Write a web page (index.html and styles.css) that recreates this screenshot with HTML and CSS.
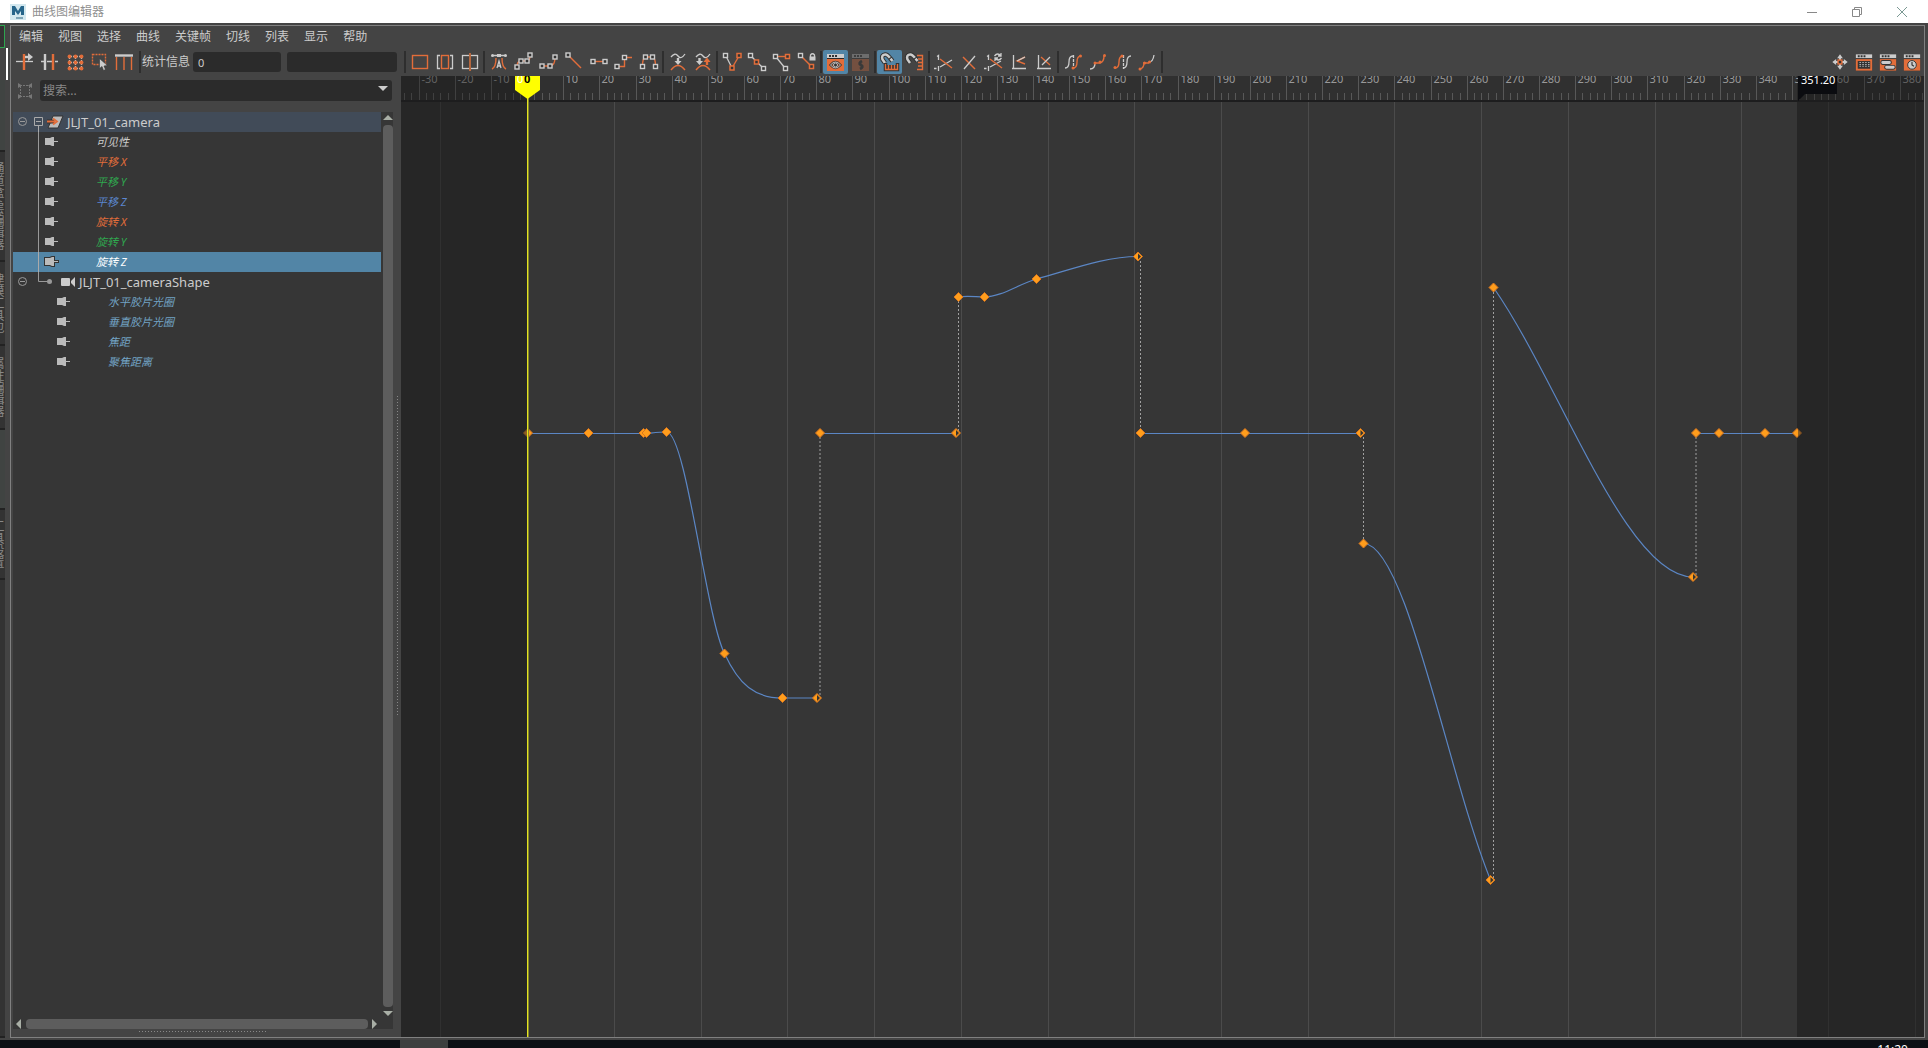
FILE: index.html
```html
<!DOCTYPE html>
<html lang="zh-CN">
<head>
<meta charset="utf-8">
<title>曲线图编辑器</title>
<link rel="stylesheet" href="styles.css">
</head>
<body>
<svg class="sprite" aria-hidden="true">
  <defs>
    <g id="sq"><rect x="-2" y="-2" width="4" height="4" fill="#333" stroke="#ccc" stroke-width="1.4"/></g>
    <g id="sqo"><rect x="-2" y="-2" width="4" height="4" fill="#333" stroke="#e26d3a" stroke-width="1.5"/></g>
    <g id="win">
      <rect x="4" y="4" width="17" height="17" fill="#2b2b2b"/>
      <rect x="4" y="4" width="17" height="4" fill="#ccc"/>
      <path d="M6 6h2M9 6h2M12 6h2" stroke="#333" stroke-width="2"/>
      <rect x="4" y="9" width="17" height="12" fill="#e26d3a"/>
    </g>
    <g id="magnet"><path d="M8 13L5.500 9.500Q4 5 8 4.500Q10 4 13 8L15.500 11" fill="none" stroke="#333" stroke-width="4.500"/><path d="M8 13L5.500 9.500Q4 5 8 4.500Q10 4 13 8L15.500 11" fill="none" stroke="#ccc" stroke-width="2.500" stroke-dasharray="17 1 3"/></g>
  </defs>
  <symbol id="t-move" viewBox="0 0 25 24"><path class="g" d="M3 11.500h17"/><path class="o w" d="M11 4v16"/><path class="g w" d="M12 7h5"/><path class="gf" d="M15 3l5 4-5 4z"/></symbol>
  <symbol id="t-insert" viewBox="0 0 25 24"><path class="g" d="M3 11.500h3M9 11.500h5M17 11.500h3"/><path class="g w" d="M7 4v16"/><path class="o w" d="M15 4v16"/></symbol>
  <symbol id="t-lattice" viewBox="0 0 25 24"><path class="g" stroke-dasharray="1 1" d="M6 6.500h13M6 12.500h13M6 18.500h13M6.500 6v13M12.500 6v13M18.500 6v13"/><g class="of"><circle cx="6.500" cy="6.500" r="1.900"/><circle cx="12.500" cy="6.500" r="1.900"/><circle cx="18.500" cy="6.500" r="1.900"/><circle cx="6.500" cy="12.500" r="1.900"/><circle cx="12.500" cy="12.500" r="1.900"/><circle cx="18.500" cy="12.500" r="1.900"/><circle cx="6.500" cy="18.500" r="1.900"/><circle cx="12.500" cy="18.500" r="1.900"/><circle cx="18.500" cy="18.500" r="1.900"/></g></symbol>
  <symbol id="t-region" viewBox="0 0 25 24"><rect class="o" stroke-dasharray="2 1" x="4.500" y="4.500" width="13" height="10"/><path class="gf" stroke="#333" stroke-width=".6" d="M11.500 8.500v10l2.500-2 1.500 4 2-1-1.500-3.500 3.500-.5z"/></symbol>
  <symbol id="t-retime" viewBox="0 0 25 24"><path class="g w" d="M2 5.500h18"/><path class="o" d="M3.500 7v13M11 7v13M18.500 7v13"/></symbol>
  <symbol id="t-all" viewBox="0 0 25 24"><rect class="o" x="5.500" y="5.500" width="15" height="13"/></symbol>
  <symbol id="t-range" viewBox="0 0 25 24"><path class="g" d="M8 5.500H5.500v13H8M18 5.500h2.500v13H18"/><rect class="o" x="9.500" y="5.500" width="7" height="13"/></symbol>
  <symbol id="t-now" viewBox="0 0 25 24"><rect class="g" x="5.500" y="5.500" width="15" height="13"/><path d="M13 3v18" stroke="#b5683f" stroke-width="2"/></symbol>
  <symbol id="t-auto" viewBox="0 0 25 24"><path class="g" d="M7 5.500h12M11 18l2-7 2 7M12 16h2"/><path class="o" d="M6 19q4-2 4-11M20 19q-4-2-4-11"/><circle class="gf" cx="6.500" cy="5.500" r="1.500"/><rect class="gf" x="11" y="4" width="4" height="3"/><circle class="gf" cx="19.500" cy="5.500" r="1.500"/></symbol>
  <symbol id="t-spline" viewBox="0 0 25 24"><path class="o" d="M6 17q0-6 4-6h6q3 0 3-6"/><use href="#sq" x="6" y="17"/><use href="#sq" x="10" y="11"/><use href="#sq" x="16" y="11"/><use href="#sq" x="19" y="5"/></symbol>
  <symbol id="t-clamp" viewBox="0 0 25 24"><path class="o" d="M6 16h8q5 0 5-9"/><use href="#sq" x="6" y="16"/><use href="#sq" x="14" y="16"/><use href="#sq" x="19" y="7"/></symbol>
  <symbol id="t-linear" viewBox="0 0 25 24"><path class="o" d="M8 6l12 12"/><use href="#sq" x="7" y="5"/></symbol>
  <symbol id="t-flat" viewBox="0 0 25 24"><path class="o" d="M7 11.500h12"/><use href="#sq" x="7" y="11.500"/><use href="#sq" x="19" y="11.500"/></symbol>
  <symbol id="t-step" viewBox="0 0 25 24"><path class="o" d="M6 16.500h7.500v-9H21"/><use href="#sq" x="6" y="16.500"/><use href="#sq" x="13.500" y="7.500"/></symbol>
  <symbol id="t-plateau" viewBox="0 0 25 24"><path class="o" d="M6.500 16q0-8 3-9h7q3 1 3 9"/><use href="#sq" x="6.500" y="16.500"/><use href="#sq" x="9.500" y="7"/><use href="#sq" x="16.500" y="7"/><use href="#sq" x="19.500" y="16.500"/></symbol>
  <symbol id="t-buffer" viewBox="0 0 25 24"><path class="g" d="M6 7q4-5 7-1t7-2"/><path class="g w" d="M13 8v4"/><path class="gf" d="M9.500 11h7L13 15z"/><path class="o" d="M6 20q7-9 14 0"/></symbol>
  <symbol id="t-swap" viewBox="0 0 25 24"><path class="g" d="M6 7q4-5 7-1t7-2"/><path class="g w" d="M9.500 8v4"/><path class="gf" d="M6 11h7l-3.500 4z"/><path class="o w" d="M17 11v4"/><path class="of" d="M13.500 12h7L17 7.500z"/><path class="o" d="M6 20q7-9 14 0"/></symbol>
  <symbol id="t-break" viewBox="0 0 25 24"><path class="g" d="M7 6l6 12"/><path class="o" d="M13 18l7-12"/><use href="#sq" x="6.500" y="5.500"/><use href="#sqo" x="20" y="5.500"/><use href="#sqo" x="13" y="18"/></symbol>
  <symbol id="t-unify" viewBox="0 0 25 24"><path class="g" d="M7 6l12 12"/><use href="#sq" x="6.500" y="5.500"/><use href="#sqo" x="12.500" y="12"/><use href="#sq" x="19.500" y="18.500"/></symbol>
  <symbol id="t-free" viewBox="0 0 25 24"><path class="o" d="M7 6.500h11"/><path class="g" d="M7 7l9 11"/><use href="#sq" x="6.500" y="6.500"/><use href="#sqo" x="18.500" y="6.500"/><use href="#sq" x="16.500" y="18.500"/></symbol>
  <symbol id="t-lock" viewBox="0 0 25 24"><path class="o" d="M7 6l10 10"/><use href="#sq" x="6.500" y="5.500"/><use href="#sqo" x="17.500" y="16.500"/><rect class="gf" x="15.500" y="6.500" width="6" height="4"/><path class="g" d="M16.500 7V5q2-2.500 4 0v2"/></symbol>
  <symbol id="t-autoload" viewBox="0 0 25 24"><use href="#win"/><path d="M7.500 15q5-6 10 0q-5 6-10 0z" fill="#e26d3a" stroke="#4a3a32" stroke-width="2.500"/><path d="M7.500 15q5-6 10 0q-5 6-10 0z" fill="none" stroke="#bbb"/><circle cx="12.500" cy="15" r="2" fill="#333" stroke="#bbb"/></symbol>
  <symbol id="t-load" viewBox="0 0 25 24"><g opacity=".3"><use href="#win"/><path d="M14 11q-4 2-1 4t-1 4" fill="none" stroke="#222" stroke-width="3"/></g></symbol>
  <symbol id="t-timesnap" viewBox="0 0 25 24"><use href="#magnet"/><path d="M8.500 13v6.500h12V13M11.500 15v4M14.500 15v4M17.500 15v4" fill="none" stroke="#333" stroke-width="3.500"/><path class="o" stroke-width="1.800" d="M8.500 14v5.500h12V14M11.500 15v4M14.500 15v4M17.500 15v4"/></symbol>
  <symbol id="t-valuesnap" viewBox="0 0 25 24"><use href="#magnet"/><path class="o" stroke-width="1.800" d="M15 5.500h5.500v14H15M16 9h4M16 12.500h4M16 16h4"/></symbol>
  <symbol id="t-norm" viewBox="0 0 25 24"><path class="g" d="M6 6.500l1.500-1V10M3 18.500h2.500M7.500 16v5M9 17l12-7"/><path class="o" d="M9 9l12 9"/></symbol>
  <symbol id="t-denorm" viewBox="0 0 25 24"><path class="o" d="M7 7l12 12"/><path class="g" d="M19 6L8 19"/></symbol>
  <symbol id="t-renorm" viewBox="0 0 25 24"><path class="g" d="M6 6.500l1.500-1V10M3 18.500h2.500M7.500 16v5M9 17l11-6"/><path class="o" d="M9 9l12 9"/><circle cx="17" cy="7" r="4" fill="#444"/><path class="g" d="M13.500 6q3-4 6.500 0M20.500 8q-3 4-6.500 0M20 3v3h-3M14 11V8h3"/></symbol>
  <symbol id="t-stack" viewBox="0 0 25 24"><path class="g" stroke-width="2" d="M7.500 5v14M6 18.500h14"/><path class="o" d="M19 7l-8 4 8 3"/><path class="g" d="M19 7l-8 4"/></symbol>
  <symbol id="t-unstack" viewBox="0 0 25 24"><path class="g" stroke-width="2" d="M7.500 5v14M6 18.500h14"/><path class="o" d="M10 7l9 8"/><path class="g" d="M19 7l-8 8"/></symbol>
  <symbol id="t-pre" viewBox="0 0 25 24"><path class="g" d="M5 18q4 0 4-6t4-6"/><path class="g" d="M13.500 5v14" stroke-dasharray="3 1"/><path class="o" d="M13 18q4 0 4-6t4-6"/><circle class="of" cx="13" cy="18" r="1.500"/><circle class="of" cx="20.500" cy="6" r="1.500"/></symbol>
  <symbol id="t-preoff" viewBox="0 0 25 24"><path class="g" d="M5 19q5 0 5-6"/><path class="o" d="M10 13h5q4-1 4-7"/><g class="of"><circle cx="10" cy="13" r="1.500"/><circle cx="15" cy="12" r="1.500"/><circle cx="19.500" cy="5.500" r="1.500"/></g></symbol>
  <symbol id="t-post" viewBox="0 0 25 24"><path class="o" d="M5 18q4 0 4-6t4-6"/><path class="g" d="M13.500 5v14" stroke-dasharray="3 1"/><path class="g" d="M13 18q4 0 4-6t4-6"/><circle class="of" cx="5" cy="17.500" r="1.500"/><circle class="of" cx="12" cy="6" r="1.500"/></symbol>
  <symbol id="t-postoff" viewBox="0 0 25 24"><path class="o" d="M5 19q4-1 4-6h5"/><path class="g" d="M14 12q4 0 5-7"/><g class="of"><circle cx="5" cy="19" r="1.500"/><circle cx="9.500" cy="13" r="1.500"/><circle cx="14.500" cy="12" r="1.500"/></g></symbol>
  <symbol id="t-pan" viewBox="0 0 25 24"><g class="gf"><path d="M12.500 4l3 4h-2v2h-2V8h-2zM12.500 20l3-4h-2v-2h-2v2h-2zM4.500 12l4-3v2h2v2h-2v2zM20.500 12l-4-3v2h-2v2h2v2z"/></g><use href="#sqo" x="12.500" y="12"/></symbol>
  <symbol id="t-dope" viewBox="0 0 25 24"><use href="#win"/><rect x="6" y="11" width="13" height="8" fill="#333"/><path class="g" stroke-dasharray="1 1" d="M8.500 12v6M11.500 12v6M14.500 12v6M17.500 12v6"/></symbol>
  <symbol id="t-trax" viewBox="0 0 25 24"><use href="#win"/><path d="M7 12.500h7M11 17.500h7" stroke="#333" stroke-width="5" stroke-linecap="round"/><path d="M7 12.500h7M11 17.500h7" stroke="#ccc" stroke-width="3" stroke-linecap="round"/></symbol>
  <symbol id="t-time" viewBox="0 0 25 24"><use href="#win"/><circle cx="12.500" cy="15" r="4.500" fill="#ccc" stroke="#333"/><path d="M12.500 12v3l2 1.500" fill="none" stroke="#333" stroke-width="1.200"/></symbol>

  <symbol id="r-root" viewBox="0 0 52 20"><circle cx="9.500" cy="9.500" r="4" fill="none" stroke="#999"/><path d="M7 9.500h5" stroke="#999"/><path d="M21.500 5.500h8v8h-8zM23 9.500h5M25.500 14v6" fill="none" stroke="#aaa"/><path d="M40 4h10l-5 12H35z" fill="#bbb" stroke="#333"/><path d="M34 9.500h8" stroke="#333" stroke-width="4"/><path d="M34 9.500h8M40 6.500l4 3-4 3" fill="none" stroke="#e26d3a" stroke-width="1.800"/></symbol>
  <symbol id="r-attr" viewBox="0 0 52 20"><path d="M25.500 0v20" stroke="#999"/><path d="M32 6h5l2-1h2v4h4v1h-4v4h-2l-2-1h-5z" fill="#bbb"/></symbol>
  <symbol id="r-sel" viewBox="0 0 52 20"><path d="M25.500 0v20" stroke="#aaa"/><path d="M32 6h5l2-1h2v4h4v1h-4v4h-2l-2-1h-5z" fill="#bbb" stroke="#333" stroke-width="2" paint-order="stroke"/></symbol>
  <symbol id="r-shape" viewBox="0 0 64 20"><circle cx="9.500" cy="9.500" r="4" fill="none" stroke="#999"/><path d="M7 9.500h5M25.500 0v9.500H36" fill="none" stroke="#999"/><circle cx="36.500" cy="9.500" r="2.500" fill="#999"/><rect x="48" y="6" width="9" height="8" rx="1" fill="#ccc"/><path d="M62 5v10l-4-4V9z" fill="#ccc"/></symbol>
  <symbol id="r-sub" viewBox="0 0 64 20"><path d="M44 6h5l2-1h2v4h4v1h-4v4h-2l-2-1h-5z" fill="#bbb"/></symbol>
</svg>

<header class="titlebar">
  <svg class="logo" viewBox="0 0 16 16" aria-hidden="true"><rect width="16" height="16" fill="#d3e8ef"/><path d="M2 11V2h3l3 5 3-5h3v9h-3V7l-3 4-3-4v4z" fill="#27658a"/><path d="M6 14h7" stroke="#7fa6b8" stroke-width="2"/></svg>
  <h1>曲线图编辑器</h1>
  <div class="winbtns">
    <button aria-label="最小化"><svg viewBox="0 0 12 12"><path d="M1 6.500h10"/></svg></button>
    <button aria-label="还原"><svg viewBox="0 0 12 12"><path d="M1.500 3.500h7v7h-7zM3.500 3V1.500h7v7H9"/></svg></button>
    <button aria-label="关闭"><svg viewBox="0 0 12 12"><path d="M1 1l10 10M11 1L1 11" stroke="#7b9993"/></svg></button>
  </div>
</header>

<div class="desk">
  <aside class="behind">
    <span class="green"></span>
    <span class="handle"></span>
    <span class="blank top"></span>
    <span class="vtab tall"><i>通道盒/层编辑器</i></span>
    <span class="vtab"><i>建模工具包</i></span>
    <span class="vtab"><i>属性编辑器</i></span>
    <span class="blank"></span>
    <span class="vtab short"><i>工具设置</i></span>
    <span class="rest"></span>
  </aside>
  <main class="editor">
    <nav class="menu">
      <button>编辑</button><button>视图</button><button>选择</button><button>曲线</button><button>关键帧</button><button>切线</button><button>列表</button><button>显示</button><button>帮助</button>
    </nav>
    <div class="toolbar">
      <button class="tool" aria-label="移动最近关键帧"><svg><use href="#t-move"/></svg></button>
      <button class="tool" aria-label="插入关键帧"><svg><use href="#t-insert"/></svg></button>
      <button class="tool" aria-label="晶格变形"><svg><use href="#t-lattice"/></svg></button>
      <button class="tool" aria-label="区域"><svg><use href="#t-region"/></svg></button>
      <button class="tool" aria-label="重定时"><svg><use href="#t-retime"/></svg></button>
      <span class="sep"></span>
      <label for="stat-time">统计信息</label>
      <input id="stat-time" class="stat" type="text" value="0">
      <input class="stat value" type="text" aria-label="值">
      <span class="sep"></span>
      <button class="tool" aria-label="框显全部"><svg><use href="#t-all"/></svg></button>
      <button class="tool" aria-label="框显播放范围"><svg><use href="#t-range"/></svg></button>
      <button class="tool" aria-label="居中当前时间"><svg><use href="#t-now"/></svg></button>
      <span class="sep"></span>
      <button class="tool" aria-label="自动切线"><svg><use href="#t-auto"/></svg></button>
      <button class="tool" aria-label="样条线切线"><svg><use href="#t-spline"/></svg></button>
      <button class="tool" aria-label="钳制切线"><svg><use href="#t-clamp"/></svg></button>
      <button class="tool" aria-label="线性切线"><svg><use href="#t-linear"/></svg></button>
      <button class="tool" aria-label="平坦切线"><svg><use href="#t-flat"/></svg></button>
      <button class="tool" aria-label="阶跃切线"><svg><use href="#t-step"/></svg></button>
      <button class="tool" aria-label="高原切线"><svg><use href="#t-plateau"/></svg></button>
      <span class="sep"></span>
      <button class="tool" aria-label="缓冲区曲线快照"><svg><use href="#t-buffer"/></svg></button>
      <button class="tool" aria-label="交换缓冲区曲线"><svg><use href="#t-swap"/></svg></button>
      <span class="sep"></span>
      <button class="tool" aria-label="断开切线"><svg><use href="#t-break"/></svg></button>
      <button class="tool" aria-label="统一切线"><svg><use href="#t-unify"/></svg></button>
      <button class="tool" aria-label="释放切线长度"><svg><use href="#t-free"/></svg></button>
      <button class="tool" aria-label="锁定切线长度"><svg><use href="#t-lock"/></svg></button>
      <span class="sep"></span>
      <button class="tool on" aria-label="自动加载"><svg><use href="#t-autoload"/></svg></button>
      <button class="tool" aria-label="加载选定对象" disabled><svg><use href="#t-load"/></svg></button>
      <span class="sep"></span>
      <button class="tool on" aria-label="时间捕捉"><svg><use href="#t-timesnap"/></svg></button>
      <button class="tool" aria-label="值捕捉"><svg><use href="#t-valuesnap"/></svg></button>
      <span class="sep"></span>
      <button class="tool" aria-label="规格化"><svg><use href="#t-norm"/></svg></button>
      <button class="tool" aria-label="反规格化"><svg><use href="#t-denorm"/></svg></button>
      <button class="tool" aria-label="重新规格化"><svg><use href="#t-renorm"/></svg></button>
      <button class="tool" aria-label="堆叠曲线"><svg><use href="#t-stack"/></svg></button>
      <button class="tool" aria-label="取消堆叠"><svg><use href="#t-unstack"/></svg></button>
      <span class="sep"></span>
      <button class="tool" aria-label="前方循环"><svg><use href="#t-pre"/></svg></button>
      <button class="tool" aria-label="带偏移的前方循环"><svg><use href="#t-preoff"/></svg></button>
      <button class="tool" aria-label="后方循环"><svg><use href="#t-post"/></svg></button>
      <button class="tool" aria-label="带偏移的后方循环"><svg><use href="#t-postoff"/></svg></button>
      <span class="sep"></span>
      <div class="right">
        <button class="tool" aria-label="平移"><svg><use href="#t-pan"/></svg></button>
        <button class="tool" aria-label="摄影表"><svg><use href="#t-dope"/></svg></button>
        <button class="tool" aria-label="Trax 编辑器"><svg><use href="#t-trax"/></svg></button>
        <button class="tool" aria-label="时间编辑器"><svg><use href="#t-time"/></svg></button>
      </div>
    </div>
    <div class="work">
      <section class="outliner">
        <form class="search">
          <svg class="fit" viewBox="0 0 16 16" aria-hidden="true"><path d="M3.500 3v10M12.500 3v10M3 2.500h10M3 13.500h10" fill="none" stroke="#777" stroke-dasharray="2 1"/><path d="M1 0l4 2.500L1 5zM15 0l-4 2.500L15 5zM1 11l4 2.500L1 16zM15 11l-4 2.500L15 16z" fill="#777"/></svg>
          <input type="text" placeholder="搜索..." aria-label="搜索">
          <svg class="caret" viewBox="0 0 10 6" aria-hidden="true"><path d="M0 0h10L5 5z" fill="#ccc"/></svg>
        </form>
        <div class="tree">
          <ul>
            <li class="node root"><svg><use href="#r-root"/></svg>JLJT_01_camera</li>
            <li class="attr"><svg><use href="#r-attr"/></svg>可见性</li>
            <li class="attr x"><svg><use href="#r-attr"/></svg>平移 X</li>
            <li class="attr y"><svg><use href="#r-attr"/></svg>平移 Y</li>
            <li class="attr z"><svg><use href="#r-attr"/></svg>平移 Z</li>
            <li class="attr x"><svg><use href="#r-attr"/></svg>旋转 X</li>
            <li class="attr y"><svg><use href="#r-attr"/></svg>旋转 Y</li>
            <li class="attr selected"><svg><use href="#r-sel"/></svg>旋转 Z</li>
            <li class="node shape"><svg><use href="#r-shape"/></svg>JLJT_01_cameraShape</li>
            <li class="attr sub"><svg><use href="#r-sub"/></svg>水平胶片光圈</li>
            <li class="attr sub"><svg><use href="#r-sub"/></svg>垂直胶片光圈</li>
            <li class="attr sub"><svg><use href="#r-sub"/></svg>焦距</li>
            <li class="attr sub"><svg><use href="#r-sub"/></svg>聚焦距离</li>
          </ul>
          <div class="vbar"><i class="up"></i><b></b><i class="down"></i></div>
          <div class="hbar"><i class="left"></i><b></b><i class="rightarrow"></i></div>
        </div>
        <div class="hgrip"></div>
      </section>
      <div class="vgrip"></div>
      <svg class="graph" id="graph" role="img" aria-label="旋转 Z 动画曲线"></svg>
    </div>
  </main>
</div>
<footer class="taskbar"><span class="task"></span><time>11:20</time></footer>
<script src="graph.js"></script>
</body>
</html>
```
FILE: styles.css
```css
* { box-sizing: border-box; }
html, body { height: 100%; }
body {
  margin: 0;
  display: flex;
  flex-direction: column;
  overflow: hidden;
  background: #444;
  color: #ccc;
  font: 12px/16px "Noto Sans", "Noto Sans CJK SC", sans-serif;
}
button, input { font: inherit; color: inherit; border: 0; padding: 0; margin: 0; background: none; }
ul { list-style: none; margin: 0; padding: 0; }
.sprite { position: absolute; width: 0; height: 0; }

.g { fill: none; stroke: #ccc; stroke-width: 1.3; }
.o { fill: none; stroke: #e26d3a; stroke-width: 1.4; }
.w { stroke-width: 2.4; }
.gf { fill: #ccc; }
.of { fill: #e26d3a; }

.titlebar { display: flex; align-items: center; height: 23px; flex: none; padding: 0 4px 0 10px; background: #fff; }
.logo { width: 16px; height: 16px; }
.titlebar h1 { margin: 0 0 0 6px; font-size: 12px; font-weight: 400; color: #909090; }
.winbtns { display: flex; margin-left: auto; }
.winbtns button { width: 45px; height: 20px; display: grid; place-items: center; }
.winbtns svg { width: 12px; height: 12px; fill: none; stroke: #888; }

.desk { flex: 1; min-height: 0; display: flex; padding: 2px 3px 2px 0; }

.behind { width: 10px; flex: none; display: flex; flex-direction: column; overflow: hidden; }
.behind span { width: 5px; flex: none; background: #333; border-bottom: 2px solid #222; }
.behind .green { height: 23px; border: 1px solid #2ea44f; border-left: 0; }
.behind .handle { width: 8px; height: 32px; background: none; border: 0; border-right: 2px solid #fff; }
.behind .blank { height: 80px; background: #404442; }
.behind .top { height: 72px; }
.behind .vtab { height: 84px; overflow: hidden; display: flex; justify-content: flex-end; align-items: center; padding-right: 2px; }
.behind .vtab i { writing-mode: vertical-rl; font-style: normal; color: #888; line-height: 12px; flex: none; white-space: nowrap; }
.behind .tall { height: 110px; }
.behind .short { height: 70px; }
.behind .rest { flex: 1; }

.editor { flex: 1; min-width: 0; display: flex; flex-direction: column; border: 1px solid #808080; }

.menu { display: flex; gap: 15px; height: 24px; flex: none; padding: 2px 0 0 8px; }
.menu button { height: 18px; }

.toolbar { display: flex; align-items: center; height: 26px; flex: none; padding: 0 0 2px 2px; }
.tool { width: 25px; height: 24px; flex: none; border-radius: 2px; }
.tool svg { width: 25px; height: 24px; display: block; }
.tool.on { background: #5285a6; }
.sep { width: 2px; height: 22px; margin: 0 1px; background: #2e2e2e; flex: none; }
.stat { width: 88px; height: 20px; margin: 0 6px 0 3px; padding: 0 5px; background: #2b2b2b; border-radius: 3px; font-size: 11px; }
.stat.value { width: 110px; margin-left: 0; }
.right { margin-left: auto; display: flex; }
.right .tool { width: 24px; }
.right svg { width: 24px; }

.work { flex: 1; min-height: 0; display: flex; }
.outliner { width: 382px; flex: none; display: flex; flex-direction: column; padding: 4px 0 0 2px; }
.search { display: flex; align-items: center; height: 21px; flex: none; position: relative; }
.fit { width: 16px; height: 16px; margin: 0 7px 0 4px; }
.search input { flex: 1; height: 21px; padding: 0 3px; background: #2b2b2b; border-radius: 3px; margin-right: 1px; }
.search input::placeholder { color: #888; opacity: 1; }
.caret { position: absolute; right: 5px; top: 6px; width: 10px; height: 6px; }

.tree { flex: 1; min-height: 0; margin-top: 11px; background: #363636; display: grid; grid-template: 1fr 10px / 1fr 12px; }
.tree ul { overflow: hidden; }
.tree li { display: flex; align-items: center; height: 20px; white-space: pre; }
.tree li svg { width: 52px; height: 20px; margin-right: 31px; flex: none; }
.tree .node { font-size: 13px; line-height: 14px; }
.tree .node svg { margin-right: 2px; }
.tree .root { background: #414b58; }
.tree .shape svg { width: 64px; }
.tree .attr { font-size: 11px; font-style: italic; }
.tree .x { color: #e26d3a; }
.tree .y { color: #2fa84f; }
.tree .z { color: #5b86cf; }
.tree .selected { background: #5285a6; color: #fff; }
.tree .sub { color: #72a3c4; }
.tree .sub svg { width: 64px; }

.vbar { display: flex; flex-direction: column; align-items: center; padding: 3px 0 3px 2px; }
.vbar b { flex: 1; width: 10px; margin: 5px 0 4px; border-radius: 4px; background: #5d5d5d; }
.hbar { display: flex; align-items: center; padding: 0 4px 0 3px; }
.hbar b { flex: 1; height: 10px; margin: 0 4px 0 5px; border-radius: 4px; background: #5d5d5d; }
.up, .down { border: 5px solid transparent; border-top-width: 0; border-bottom-color: #a9afa6; }
.down { border-top: 5px solid #a9afa6; border-bottom-width: 0; }
.left, .rightarrow { border: 5px solid transparent; border-left-width: 0; border-right-color: #a9afa6; }
.rightarrow { border-left: 5px solid #a9afa6; border-right-width: 0; }
.hgrip { height: 8px; flex: none; width: 128px; margin-left: 126px; background: repeating-linear-gradient(90deg, #888 0 1px, transparent 1px 3px) 0 2px / 100% 1px no-repeat; }
.vgrip { width: 8px; flex: none; background: repeating-linear-gradient(#888 0 1px, transparent 1px 3px) 4px 320px / 1px 320px no-repeat; }

.graph { flex: 1; min-width: 0; height: 100%; background: #363636; font: 11px "Noto Sans", sans-serif; }
.graph .outside { fill: #262626; }
.graph .ruler { fill: #303030; }
.graph .ruler-out { fill: #252525; }
.graph .edge { fill: #1d1d1e; }
.graph .grid { stroke: #4b4b4b; stroke-width: 1; }
.graph .grid.dim { stroke: #303030; }
.graph .tick { stroke: #585858; }
.graph .tick.dim { stroke: #404040; }
.graph .num { fill: #999; }
.graph .num.dim { fill: #626262; }
.graph .curve { fill: none; stroke: #5b86c4; stroke-width: 1.2; }
.graph .jump { stroke: #a0a0a0; stroke-dasharray: 2 2; }
.graph .key { fill: #ff9d1c; stroke: #d8761f; stroke-width: 1; }
.graph .hole { fill: #333; }
.graph .fade { fill: #262626; opacity: .5; }

.taskbar { height: 8px; flex: none; display: flex; overflow: hidden; background: #0c0f14; }
.task { width: 48px; margin-left: 400px; background: #3d3f3f; }
.taskbar time { margin: 2px 20px 0 auto; color: #fff; }
```
FILE: graph.js
```js
const NS = 'http://www.w3.org/2000/svg';
const FRAME = 3.614, ZERO = 527.6, LEFT = 401, TOP = 76, END = 1797;

const graph = document.getElementById('graph');
function add(parent, tag, attrs, text) {
  const el = document.createElementNS(NS, tag);
  for (const name in attrs) el.setAttribute(name, attrs[name]);
  if (text !== undefined) el.textContent = text;
  parent.appendChild(el);
  return el;
}
// The plot is described in window coordinates.
const plot = add(graph, 'g', { transform: `translate(${-LEFT} ${-TOP})` });
const outside = frame => frame < 0 || frame > 351.2;
const xOf = frame => Math.floor(ZERO + frame * FRAME) + 0.5;

add(plot, 'rect', { class: 'outside', x: LEFT, y: TOP, width: 127, height: '100%' });
add(plot, 'rect', { class: 'outside', x: END, y: TOP, width: '100%', height: '100%' });

for (let f = -24; f <= 384; f += 24) {
  const x = xOf(f);
  add(plot, 'line', { class: 'grid' + (outside(f) ? ' dim' : ''), x1: x, x2: x, y1: 101, y2: 4000 });
}

add(plot, 'rect', { class: 'ruler', x: LEFT, y: TOP, width: '100%', height: 25 });
add(plot, 'rect', { class: 'ruler-out', x: LEFT, y: TOP, width: 127, height: 25 });
add(plot, 'rect', { class: 'ruler-out', x: END, y: TOP, width: '100%', height: 25 });
for (let f = -34; f <= 386; f += 2) {
  const x = xOf(f), major = f % 10 === 0, dim = outside(f) ? ' dim' : '';
  add(plot, 'line', { class: 'tick' + dim, x1: x, x2: x, y1: major ? TOP : 93, y2: 100 });
  if (major && f !== 0) add(plot, 'text', { class: 'num' + dim, x: x + 2, y: 83 }, f);
}
add(plot, 'rect', { class: 'edge', x: LEFT, y: 100, width: '100%', height: 2 });

for (const [x, y1, y2] of [[820, 433, 698], [958.5, 297, 433], [1140.5, 257, 433],
  [1363.5, 433, 543], [1493.5, 288, 880], [1696, 433, 577]]) {
  add(plot, 'line', { class: 'jump', x1: x, x2: x, y1, y2 });
}

add(plot, 'path', { class: 'curve', d: `
  M528 433.5H646.5C652 433 660 432 666.500 432C686 432 706 617 724.500 653.500C739 685 755 698 782.500 698H817
  M820 433.500H956
  M958.500 297C967 295.500 976 297 984.500 297C1001 297 1019 284 1036.500 279C1070 270 1104 256.500 1138 256.500
  M1140.500 433.500H1360.500
  M1363.500 543.500C1406 543.500 1448 775 1490.500 880
  M1493.500 287.500C1560 383 1626 577 1693 577
  M1696 433.500H1797` });

const keys = [[528, 433], [588.5, 433], [643.5, 433], [646.5, 433], [666.5, 432], [724.5, 653.5],
  [782.5, 698], [817, 698, 1], [820, 433], [956, 433, 1], [958.5, 297], [984.5, 297], [1036.5, 279],
  [1138, 256.5, 1], [1140.5, 433], [1245, 433], [1360.5, 433, 1], [1363.5, 543.5], [1490.5, 880, 1],
  [1493.5, 287.5], [1693, 577, 1], [1696, 433], [1719, 433], [1765, 433], [1797, 433]];
for (const [x, y, half] of keys) {
  add(plot, 'path', { class: 'key', d: `M${x} ${y - 4.5}l4.5 4.5-4.5 4.5-4.5-4.5z` });
  if (half) add(plot, 'path', { class: 'hole', d: `M${x} ${y - 3}l3 3-3 3z` });
}
add(plot, 'rect', { class: 'fade', x: 522, y: 427, width: 5, height: 12 });
add(plot, 'rect', { class: 'fade', x: 1798, y: 427, width: 6, height: 12 });

// Current time marker.
add(plot, 'rect', { x: 527, y: 95, width: 1, height: 4000, fill: '#e4e420' });
add(plot, 'rect', { x: 528, y: 95, width: 1, height: 4000, fill: '#85852e' });
add(plot, 'path', { d: 'M515 76h25v14l-12.500 9L515 90z', fill: '#ff0' });
add(plot, 'text', { x: 517, y: 83, fill: '#fff' }, '0');
add(plot, 'text', { x: 524, y: 83, fill: '#000', 'font-weight': 700 }, '0');

// End of playback range.
add(plot, 'path', { d: 'M1798 76h39v18h-32l-7 7z', fill: '#0b0c10' });
add(plot, 'text', { x: 1801, y: 84, fill: '#fff' }, '351.20');
```
